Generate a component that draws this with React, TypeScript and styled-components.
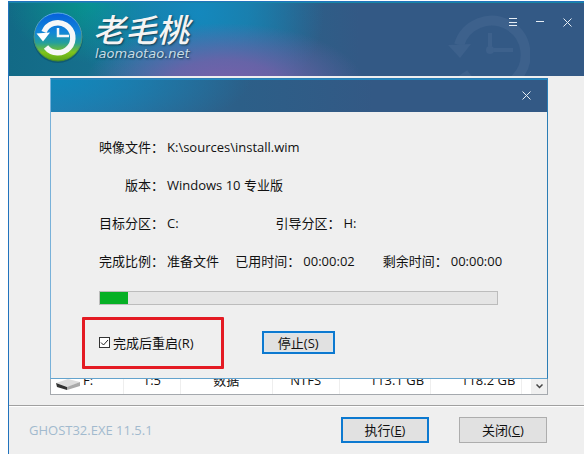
import React from "react";
import styled, { createGlobalStyle, css } from "styled-components";

const GlobalStyle = createGlobalStyle`
  *, *::before, *::after { box-sizing: border-box; }
  body {
    margin: 0;
    background: #fff;
    color: #111;
    font: 13px/18px "Open Sans", "Noto Sans CJK SC", sans-serif;
  }
  button, input { font: inherit; color: inherit; margin: 0; }
  h1, h2, p, dl, dd { margin: 0; }
`;

const Page = styled.div`
  min-height: 100vh;
  padding: 1px 0 0 8px;
  display: flex;
`;

const AppWindow = styled.div`
  flex: 1;
  min-width: 0;
  display: flex;
  flex-direction: column;
  border: solid #2273bd;
  border-width: 1px 0 0 1px;
  background: #efefef;
`;

const Banner = styled.header`
  position: relative;
  display: flex;
  align-items: flex-start;
  justify-content: space-between;
  height: 74px;
  overflow: hidden;
  border-top: 1px solid #1687a8;
  background:
    radial-gradient(ellipse 140px 62px at 215px 82px, #7860aa 0, #7360a8d8 40%, #7060a800 100%),
    radial-gradient(ellipse 125px 110px at 190px 10px, #1488bd 0, #1686b9c0 40%, #1686b900 100%),
    radial-gradient(ellipse 85px 60px at 82px 0, #06948c 0, #06948c00 100%),
    linear-gradient(90deg, #126a86 0, #1b7595 180px, #2c5f88 290px, #335985 350px);
`;

const Brand = styled.div`
  display: flex;
  gap: 9px;
  padding: 8px 0 0 24px;
`;

const BrandText = styled.div`
  color: #f4f4f4;
  font-style: italic;
  text-shadow: 1px 1px 2px #123c50;
`;

const BrandName = styled.h1`
  font: italic 500 32px/34px "Noto Sans CJK SC", sans-serif;
`;

const BrandSite = styled.p`
  padding-left: 2px;
  color: #c8dce6;
  font: italic 13px/17px "DejaVu Sans", sans-serif;
`;

const Watermark = styled.svg`
  position: absolute;
  right: 54px;
  top: 10px;
`;

const WindowControls = styled.div`
  position: relative;
  display: flex;
  gap: 11px;
  padding: 11px 9px 0 0;
`;

const IconButton = styled.button`
  display: grid;
  place-items: center;
  width: 16px;
  height: 16px;
  padding: 0;
  border: 0;
  background: none;
  color: #e6eef5;
`;

const Body = styled.main`
  flex: 1;
  position: relative;
  display: flex;
  flex-direction: column;
  justify-content: flex-end;
  min-height: 329px;
  padding: 0 36px 10px 41px;
`;

const DriveList = styled.div`
  display: flex;
  align-items: stretch;
  border: 1px solid #a5a9ae;
  background: #fff;
`;

const DriveTable = styled.table`
  flex: 1;
  min-width: 0;
  table-layout: fixed;
  border-collapse: collapse;
`;

const Cell = styled.td<{ $width: number; $right?: boolean }>`
  width: ${({ $width }) => $width}%;
  height: 28px;
  padding: 0;
  border-right: 1px solid #eee;
  text-align: center;
  ${({ $right }) => $right && css`
    padding-right: 6px;
    text-align: right;
  `}
  line-height: 24px;
  vertical-align: middle;
`;

const DriveName = styled.div`
  display: flex;
  gap: 3px;
  padding-left: 5px;
  svg { margin-top: 10px; }
`;

const ScrollButton = styled.button`
  display: grid;
  place-items: end center;
  width: 15px;
  padding: 0 0 5px;
  border: 0;
  background: #f0f0f0;
  color: #444;
`;

const Dialog = styled.section`
  position: absolute;
  inset: 2px 36px 26px 41px;
  display: flex;
  flex-direction: column;
  border: 1px solid #2b7db5;
  border-left-color: #78b1d9;
  border-bottom-color: #63a3cd;
  background: #efefef;
`;

const DialogBar = styled.header`
  display: flex;
  justify-content: flex-end;
  padding: 7px 13px 9px 0;
  border-top: 1px solid #2588bd;
  background:
    radial-gradient(ellipse 200px 60px at 0 0, #1088bb 0, #1088bb00 100%),
    linear-gradient(90deg, #2b78ab 0, #2c6793 22%, #2c5f88 38%, #335985 65%);
`;

const DialogBody = styled.div`
  padding: 26px 49px 0 48px;
`;

const Details = styled.dl`
  display: flex;
  flex-direction: column;
  gap: 20px;
`;

const DetailRow = styled.div<{ $columns?: string }>`
  display: grid;
  grid-template-columns: ${({ $columns }) => $columns ?? "1fr"};
  white-space: nowrap;
`;

const Pair = styled.div`
  display: flex;
  gap: 3px;
  min-width: 0;
`;

const Label = styled.dt`
  flex: none;
  width: 65px;
  display: flex;
  justify-content: flex-end;
`;

const Progress = styled.div`
  height: 14px;
  margin-top: 21px;
  border: 1px solid #bcbcbc;
  background: #e5e5e5;
`;

const ProgressFill = styled.div`
  height: 100%;
  background: #06b025;
`;

const Actions = styled.div`
  display: flex;
  align-items: center;
  gap: 68px;
  margin-top: 26px;
`;

const RestartOption = styled.label`
  position: relative;
  display: flex;
  align-items: center;
  gap: 3px;
  white-space: nowrap;
  &::after {
    content: "";
    position: absolute;
    inset: -17px -30px -17px -17px;
    border: 3px solid #e41b23;
    border-radius: 1px;
    pointer-events: none;
  }
`;

const Checkbox = styled.input`
  appearance: none;
  width: 11px;
  height: 11px;
  border: 1px solid #333;
  background: #fff;
  &:checked {
    background: #fff url("data:image/svg+xml,%3Csvg xmlns='http://www.w3.org/2000/svg' viewBox='0 0 9 9'%3E%3Cpath d='M1 4.5 3.5 7 8 2' fill='none' stroke='%23222'/%3E%3C/svg%3E") center / 9px 9px no-repeat;
  }
`;

const PushButton = styled.button<{ $active?: boolean; $small?: boolean }>`
  width: 88px;
  height: 26px;
  padding: 0;
  border: 1px solid #adadad;
  background: #e1e1e1;
  ${({ $active }) => $active && css`border: 2px solid #0c79d0;`}
  ${({ $small }) => $small && css`
    width: 73px;
    height: 23px;
    box-shadow: inset 0 0 0 1px #d9e6ef;
    line-height: 16px;
  `}
`;

const Footer = styled.footer`
  display: flex;
  align-items: center;
  justify-content: space-between;
  height: 49px;
  padding: 0 37px 0 20px;
  border-top: 1px solid #a0a0a0;
  box-shadow: inset 0 1px #fff;
`;

const Version = styled.span`
  color: #a2bace;
`;

const FooterButtons = styled.div`
  display: flex;
  gap: 30px;
`;

const CloseIcon = () => (
  <svg width="9" height="9" viewBox="0 0 9 9" stroke="currentColor" aria-hidden="true">
    <path d="M.5.5l8 8M8.5.5l-8 8" />
  </svg>
);

const LogoMark = () => (
  <svg width="51" height="53" viewBox="0 0 51 53" aria-hidden="true">
    <defs>
      <linearGradient id="disc" x2="0" y2="1">
        <stop stopColor="#0560dc" />
        <stop offset=".4" stopColor="#1286d8" />
        <stop offset=".62" stopColor="#259f9c" />
        <stop offset=".82" stopColor="#7fc41c" />
        <stop offset="1" stopColor="#5aa516" />
      </linearGradient>
      <linearGradient id="ring" x2="0" y2="1">
        <stop stopColor="#57a9ed" />
        <stop offset="1" stopColor="#498b24" />
      </linearGradient>
    </defs>
    <circle cx="25" cy="27" r="25" fill="#073f52" opacity=".4" />
    <circle cx="25" cy="26" r="24" fill="url(#disc)" stroke="url(#ring)" />
    <path d="M11 21A15 15 0 1 1 13 36" fill="none" stroke="#f6f7f8" strokeWidth="5.500" />
    <path d="M3.500 22.500L17 21.500 10 30.500z" fill="#fff" />
    <path d="M25 17v8h11" fill="none" stroke="#f6f7f8" strokeWidth="2.500" />
  </svg>
);

const DriveIcon = () => (
  <svg width="24" height="13" viewBox="0 0 24 13" aria-hidden="true">
    <path d="M0 5L12 1l12 3-12 5z" fill="#dedede" />
    <path d="M0 5l11 4v3L1 9z" fill="#333" />
    <path d="M11 9l13-5v4l-13 4z" fill="#aaa" />
  </svg>
);

const columns = [
  { value: "1:5", width: 12 },
  { value: "数据", width: 19 },
  { value: "NTFS", width: 14 },
  { value: "113.1 GB", width: 19, right: true },
  { value: "118.2 GB", width: 19, right: true },
];

const Field = ({ label, value }: { label: string; value: string }) => (
  <Pair>
    <Label>{label}：</Label>
    <dd>{value}</dd>
  </Pair>
);

export default function App() {
  const progress = 7;
  return (
    <Page>
      <GlobalStyle />
      <AppWindow>
        <Banner>
          <Brand>
            <LogoMark />
            <BrandText>
              <BrandName>老毛桃</BrandName>
              <BrandSite>laomaotao.net</BrandSite>
            </BrandText>
          </Brand>
          <Watermark width="83" height="74" viewBox="0 0 83 74" fill="none" stroke="#3d618c" aria-hidden="true">
            <path d="M12 32A34 34 0 1 1 16 60" strokeWidth="10" />
            <path d="M1 32l23-1-11 14z" fill="#3d618c" stroke="none" />
            <path d="M43 20v17h23" strokeWidth="4" />
            <circle cx="43" cy="37" r="4" fill="#3d618c" stroke="none" />
          </Watermark>
          <WindowControls>
            <IconButton aria-label="菜单">
              <svg width="8" height="8" viewBox="0 0 8 8" stroke="currentColor" aria-hidden="true"><path d="M0 .5h8M0 4.500h8M0 7.500h8" /></svg>
            </IconButton>
            <IconButton aria-label="最小化">
              <svg width="8" height="8" viewBox="0 0 8 8" stroke="currentColor" aria-hidden="true"><path d="M0 3.500h8" /></svg>
            </IconButton>
            <IconButton aria-label="关闭窗口"><CloseIcon /></IconButton>
          </WindowControls>
        </Banner>
        <Body>
          <DriveList>
            <DriveTable>
              <tbody>
                <tr>
                  <Cell $width={15}><DriveName><DriveIcon />F:</DriveName></Cell>
                  {columns.map(({ value, width, right }) => (
                    <Cell key={value} $width={width} $right={right}>{value}</Cell>
                  ))}
                  <Cell $width={2} />
                </tr>
              </tbody>
            </DriveTable>
            <ScrollButton aria-label="向下滚动">
              <svg width="7" height="5" viewBox="0 0 7 5" fill="none" stroke="currentColor" strokeWidth="1.500" aria-hidden="true"><path d="M.5.5l3 3 3-3" /></svg>
            </ScrollButton>
          </DriveList>
          <Dialog role="dialog" aria-label="还原进度">
            <DialogBar>
              <IconButton aria-label="关闭对话框"><CloseIcon /></IconButton>
            </DialogBar>
            <DialogBody>
              <Details>
                <DetailRow><Field label="映像文件" value="K:\sources\install.wim" /></DetailRow>
                <DetailRow><Field label="版本" value="Windows 10 专业版" /></DetailRow>
                <DetailRow $columns="176fr 222fr">
                  <Field label="目标分区" value="C:" />
                  <Field label="引导分区" value="H:" />
                </DetailRow>
                <DetailRow $columns="136fr 147fr 115fr">
                  <Field label="完成比例" value="准备文件" />
                  <Field label="已用时间" value="00:00:02" />
                  <Field label="剩余时间" value="00:00:00" />
                </DetailRow>
              </Details>
              <Progress role="progressbar" aria-valuenow={progress} aria-valuemin={0} aria-valuemax={100}>
                <ProgressFill style={{ width: `${progress}%` }} />
              </Progress>
              <Actions>
                <RestartOption><Checkbox type="checkbox" defaultChecked />完成后重启(R)</RestartOption>
                <PushButton $active $small>停止(S)</PushButton>
              </Actions>
            </DialogBody>
          </Dialog>
        </Body>
        <Footer>
          <Version>GHOST32.EXE 11.5.1</Version>
          <FooterButtons>
            <PushButton $active>执行(<u>E</u>)</PushButton>
            <PushButton>关闭(<u>C</u>)</PushButton>
          </FooterButtons>
        </Footer>
      </AppWindow>
    </Page>
  );
}
